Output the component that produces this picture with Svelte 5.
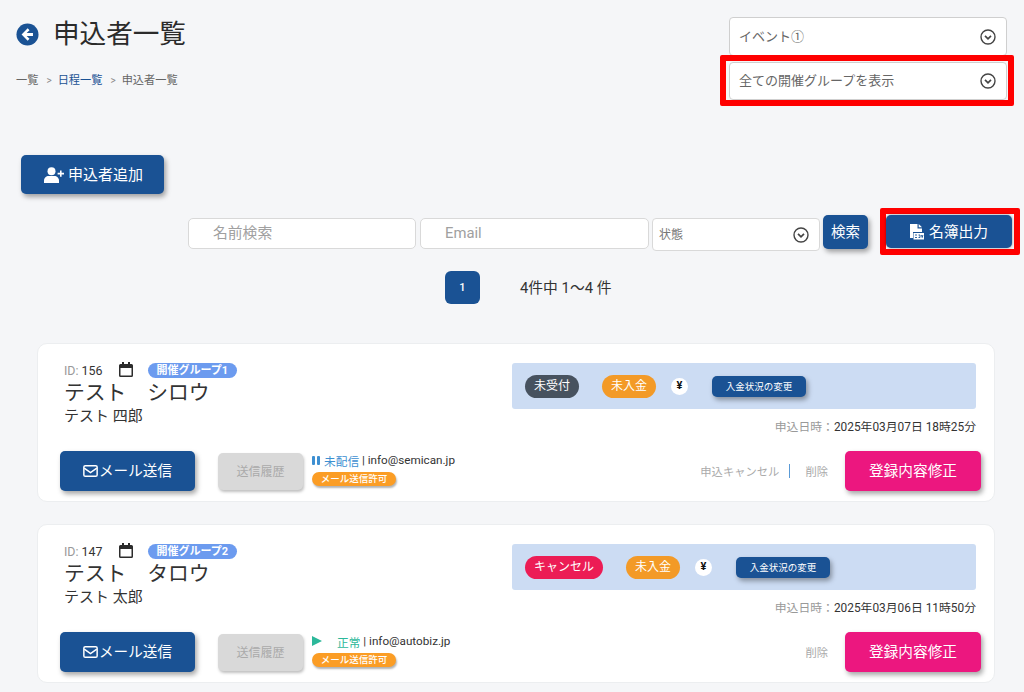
<script>
	const applicants = [
		{
			id: 156, group: '開催グループ1', kana: 'テスト　シロウ', name: 'テスト 四郎',
			state: '未受付', stateClass: 'slate', date: '2025年03月07日 18時25分',
			mail: '未配信', mailClass: 'paused', email: 'info@semican.jp', cancel: true
		},
		{
			id: 147, group: '開催グループ2', kana: 'テスト　タロウ', name: 'テスト 太郎',
			state: 'キャンセル', stateClass: 'rose', date: '2025年03月06日 11時50分',
			mail: '正常', mailClass: 'normal', email: 'info@autobiz.jp', cancel: false
		}
	];
</script>

{#snippet chevron()}
	<svg class="chevron" viewBox="0 0 16 16" width="16" height="16">
		<circle cx="8" cy="8" r="7" fill="none" stroke="#444" stroke-width="1.4" />
		<path d="M5 6.800 8 9.800 11 6.800" fill="none" stroke="#444" stroke-width="1.700" />
	</svg>
{/snippet}

<div class="page">
	<header class="top">
		<div class="heading">
			<div class="title-row">
				<svg viewBox="0 0 24 24" width="23" height="23">
					<circle cx="12" cy="12" r="11.500" fill="#1a5294" />
					<path d="M12.200 5.600 5.800 12l6.400 6.400 1.900-1.900-3-3h6.600v-3h-6.600l3-3z" fill="#fff" />
				</svg>
				<h1>申込者一覧</h1>
			</div>
			<nav class="crumbs">
				<span>一覧</span><i>&gt;</i><a href="#list">日程一覧</a><i>&gt;</i><span>申込者一覧</span>
			</nav>
		</div>
		<div class="pickers">
			<div class="select event"><span>イベント①</span>{@render chevron()}</div>
			<div class="marked marked-group">
				<div class="select"><span>全ての開催グループを表示</span>{@render chevron()}</div>
			</div>
		</div>
	</header>

	<button class="btn add" type="button">
		<svg viewBox="0 0 20 16" width="20" height="16">
			<circle cx="7.500" cy="4.200" r="4" fill="#fff" />
			<path d="M0 16v-2.400C0 10.800 2.300 9 4.500 9h6C12.700 9 15 10.800 15 13.600V16z" fill="#fff" />
			<path d="M16 3.500h1.600v2.300H20v1.600h-2.400v2.300H16V7.400h-2.400V5.800H16z" fill="#fff" />
		</svg>
		<span>申込者追加</span>
	</button>

	<div class="filters">
		<div class="field">名前検索</div>
		<div class="field email">Email</div>
		<div class="select state"><span>状態</span>{@render chevron()}</div>
		<button class="btn search" type="button"><span>検索</span></button>
		<div class="marked marked-export">
			<button class="btn export" type="button">
				<svg viewBox="0 0 14 16" width="14" height="16">
					<path d="M0 0h7.500v4.500H12V8H3v6H0z" fill="#fff" />
					<path d="M8.700 0 12 3.300H8.700z" fill="#fff" />
					<rect x="3.500" y="9" width="10.500" height="6.500" fill="#fff" />
					<path d="M5 11h2M5 13.500h2M8.500 11h1.500v2.500H8.500M11.500 11l.7 2.500.7-2.500" fill="none" stroke="#1a5294" stroke-width=".9" />
				</svg>
				<span>名簿出力</span>
			</button>
		</div>
	</div>

	<div class="paging">
		<span class="page-no">1</span>
		<span class="count">4件中 1～4 件</span>
	</div>

	{#each applicants as a}
		<article class="card">
			<div class="upper">
				<div class="who">
					<div class="meta">
						<span class="label">ID:</span>&nbsp;<span class="id">{a.id}</span>
						<svg class="cal" viewBox="0 0 14 15" width="14" height="15">
							<path d="M3 0h2v2h4V0h2v2h1.500A1.500 1.500 0 0 1 14 3.500v10a1.500 1.500 0 0 1-1.500 1.500h-11A1.500 1.500 0 0 1 0 13.500v-10A1.500 1.500 0 0 1 1.500 2H3zM1.500 6v7.500h11V6z" fill="#2c2c2c" />
						</svg>
						<span class="group">{a.group}</span>
					</div>
					<div class="kana">{a.kana}</div>
					<div class="name">{a.name}</div>
				</div>
				<div class="status">
					<div class="status-bar">
						<span class="pill {a.stateClass}">{a.state}</span>
						<span class="pill amber">未入金</span>
						<span class="yen">¥</span>
						<button class="btn change" type="button">入金状況の変更</button>
					</div>
					<div class="applied"><span>申込日時：</span>{a.date}</div>
				</div>
			</div>
			<div class="lower">
				<button class="btn send" type="button">
					<svg viewBox="0 0 16 13" width="15" height="12">
						<rect x=".8" y=".8" width="14.400" height="11.400" rx="1.500" fill="none" stroke="#fff" stroke-width="1.600" />
						<path d="M1.200 3.500 8 8.200l6.800-4.700" fill="none" stroke="#fff" stroke-width="1.600" />
					</svg><span>メール送信</span>
				</button>
				<button class="history" type="button">送信履歴</button>
				<div class="delivery">
					<div class="delivery-line">
						{#if a.mailClass === 'paused'}
							<span class="pause"></span>
						{:else}
							<span class="play"></span>
						{/if}
						<span class={a.mailClass}>{a.mail}</span> | {a.email}
					</div>
					<span class="allowed">メール送信許可</span>
				</div>
				<div class="actions">
					{#if a.cancel}
						<span class="muted">申込キャンセル</span>
						<span class="divider"></span>
					{/if}
					<span class="muted">削除</span>
					<button class="btn edit" type="button"><span>登録内容修正</span></button>
				</div>
			</div>
		</article>
	{/each}
</div>

<style>
	:global(body) {
		background: #f5f6f8;
		overflow: hidden;
	}

	.page {
		height: 692px;
		overflow: hidden;
		font-family: Roboto, "Noto Sans CJK JP", sans-serif;
		color: #333;
	}

	/* header */
	.top {
		display: flex;
		justify-content: space-between;
		padding: 17px 10px 0 16px;
	}
	.title-row {
		display: flex;
		align-items: center;
		gap: 14px;
		margin-top: 2px;
	}
	h1 {
		margin: 0;
		font-size: 26.600px;
		font-weight: 400;
		line-height: 30px;
		color: #2b2b2b;
	}
	.crumbs {
		display: flex;
		align-items: center;
		margin-top: 24px;
		font-size: 11.200px;
		line-height: 16px;
		color: #666;
	}
	.crumbs a {
		color: #1a5294;
		text-decoration: none;
	}
	.crumbs i {
		font-style: normal;
		margin: 0 6px 0 8px;
		font-size: 10px;
		color: #888;
	}

	.pickers {
		width: 294px;
		display: flex;
		flex-direction: column;
		align-items: flex-end;
	}
	.select {
		box-sizing: border-box;
		display: flex;
		align-items: center;
		justify-content: space-between;
		background: #fff;
		border: 1px solid #cfcfcf;
		border-radius: 4px;
		padding: 0 10px 0 9px;
		font-size: 13px;
		color: #666;
	}
	.select span {
		padding-bottom: 3px;
	}
	.event {
		width: 278px;
		height: 39px;
		margin-right: 7px;
	}
	.chevron {
		flex: none;
	}
	.marked {
		box-sizing: border-box;
		border: 6px solid #f00;
		border-radius: 2px;
	}
	.marked-group {
		width: 294px;
		height: 51px;
		margin-top: -1px;
		padding: 1px 1px 0 3px;
	}
	.marked-group .select {
		height: 38px;
	}

	/* buttons */
	.btn {
		border: 0;
		border-radius: 5px;
		background: #1a5294;
		color: #fff;
		font-family: inherit;
		box-shadow: 2px 3px 5px rgba(0, 0, 0, 0.35);
		display: inline-flex;
		align-items: center;
		justify-content: center;
		padding: 0;
	}
	.btn span {
		padding-bottom: 3px;
	}
	.add {
		display: flex;
		gap: 4px;
		width: 143px;
		height: 39px;
		margin: 49px 0 0 21px;
		padding-left: 2px;
		font-size: 15px;
	}

	/* search row */
	.filters {
		display: flex;
		align-items: flex-start;
		margin: 21px 0 0 188px;
	}
	.field {
		box-sizing: border-box;
		width: 228px;
		height: 31px;
		margin: 3px 4px 0 0;
		padding-left: 24px;
		background: #fff;
		border: 1px solid #d9d9d9;
		border-radius: 5px;
		font-size: 14.800px;
		line-height: 29px;
		color: #a0a0a0;
	}
	.email {
		width: 229px;
		margin-right: 3px;
	}
	.state {
		width: 168px;
		height: 33px;
		margin-top: 3px;
		padding: 0 10px 0 6px;
		border-color: #d9d9d9;
		font-size: 12px;
		color: #777;
	}
	.search {
		width: 45px;
		height: 34px;
		margin-left: 3px;
		font-size: 14.500px;
	}
	.marked-export {
		width: 140px;
		height: 47px;
		margin: -7px 0 0 12px;
	}
	.export {
		width: 126px;
		height: 33px;
		margin-top: 1px;
		gap: 5px;
		font-size: 14.800px;
		box-shadow: 0 0 3px rgba(0, 0, 0, 0.4);
	}

	.paging {
		display: flex;
		align-items: center;
		margin: 16px 0 0 445px;
	}
	.page-no {
		width: 35px;
		height: 33px;
		border-radius: 6px;
		background: #1a5294;
		color: #fff;
		font-size: 11px;
		font-weight: 500;
		display: flex;
		align-items: center;
		justify-content: center;
	}
	.count {
		margin: 0 0 2px 40px;
		font-size: 14.800px;
		color: #333;
	}

	/* applicant cards */
	.card {
		box-sizing: border-box;
		width: 958px;
		height: 159px;
		margin: 39px 0 -17px 37px;
		padding: 17px 13px 0 22px;
		background: #fff;
		border: 1px solid #eceef0;
		border-radius: 10px;
	}
	.upper {
		display: flex;
		justify-content: space-between;
		height: 89px;
	}
	.who {
		padding-left: 4px;
	}
	.meta {
		display: flex;
		align-items: center;
		height: 16px;
		margin-top: 1px;
		font-size: 12.400px;
		color: #333;
	}
	.label {
		color: #999;
	}
	.cal {
		margin: 0 0 2px 16px;
	}
	.group {
		margin-left: 15px;
		padding: 0 9px;
		height: 15px;
		line-height: 15px;
		border-radius: 8px;
		background: #6c9bef;
		color: #fff;
		font-size: 11px;
		font-weight: 700;
	}
	.kana {
		margin-top: 2px;
		font-size: 20.800px;
		line-height: 26px;
		color: #333;
	}
	.name {
		margin-top: 0;
		font-size: 15px;
		line-height: 20px;
	}

	.status {
		width: 464px;
		margin: 2px 5px 0 0;
	}
	.status-bar {
		display: flex;
		align-items: center;
		height: 46px;
		padding-left: 13px;
		background: #ccdcf3;
		border-radius: 3px;
	}
	.pill {
		height: 23px;
		padding: 0 9px;
		border-radius: 12px;
		color: #fff;
		font-size: 12px;
		line-height: 22px;
	}
	.slate {
		background: #47525f;
	}
	.rose {
		background: #ec1c55;
	}
	.amber {
		margin-left: 23px;
		background: #f39a27;
	}
	.yen {
		width: 17px;
		height: 17px;
		margin-left: 15px;
		border-radius: 50%;
		background: #fff;
		color: #111;
		font-size: 11px;
		font-weight: 700;
		line-height: 16px;
		text-align: center;
	}
	.change {
		width: 94px;
		height: 21px;
		margin-left: 24px;
		font-size: 9.500px;
	}
	.applied {
		margin-top: 10px;
		font-size: 11.850px;
		line-height: 16px;
		text-align: right;
		color: #333;
	}
	.applied span {
		color: #999;
	}

	.lower {
		display: flex;
		align-items: center;
		height: 42px;
	}
	.send {
		width: 135px;
		height: 40px;
		gap: 1px;
		font-size: 14.600px;
	}
	.history {
		width: 85px;
		height: 37px;
		margin-left: 23px;
		padding: 0 0 2px;
		border: 0;
		border-radius: 5px;
		background: #d9d9d9;
		color: #aaa;
		font-family: inherit;
		font-size: 12px;
		box-shadow: 1px 2px 3px rgba(0, 0, 0, 0.25);
	}
	.delivery {
		margin: -4px 0 0 9px;
		font-size: 11.700px;
	}
	.delivery-line {
		display: flex;
		align-items: center;
		height: 16px;
		white-space: pre;
	}
	.pause {
		width: 3px;
		height: 9px;
		background: #3d8fd1;
		box-shadow: 5px 0 #3d8fd1;
		border-radius: 1px;
		margin-right: 9px;
	}
	.play {
		width: 0;
		height: 0;
		border-left: 10px solid #2cb89a;
		border-top: 5.500px solid transparent;
		border-bottom: 5.500px solid transparent;
		margin-right: 15px;
	}
	.paused {
		color: #3d8fd1;
	}
	.normal {
		color: #2cb89a;
	}
	.allowed {
		display: inline-block;
		margin-top: 4px;
		width: 84px;
		height: 14px;
		line-height: 14px;
		border-radius: 7px;
		background: #fb9d25;
		color: #fff;
		font-size: 9.500px;
		font-weight: 500;
		text-align: center;
		box-shadow: 1px 2px 2px rgba(0, 0, 0, 0.3);
	}
	.actions {
		display: flex;
		align-items: center;
		margin-left: auto;
	}
	.muted {
		font-size: 11.300px;
		color: #aaa;
	}
	.divider {
		width: 1px;
		height: 14px;
		margin: 0 15px 0 10px;
		background: #5a9ad6;
	}
	.edit {
		width: 136px;
		height: 40px;
		margin-left: 17px;
		background: #ec177f;
		font-size: 14.700px;
	}
</style>
